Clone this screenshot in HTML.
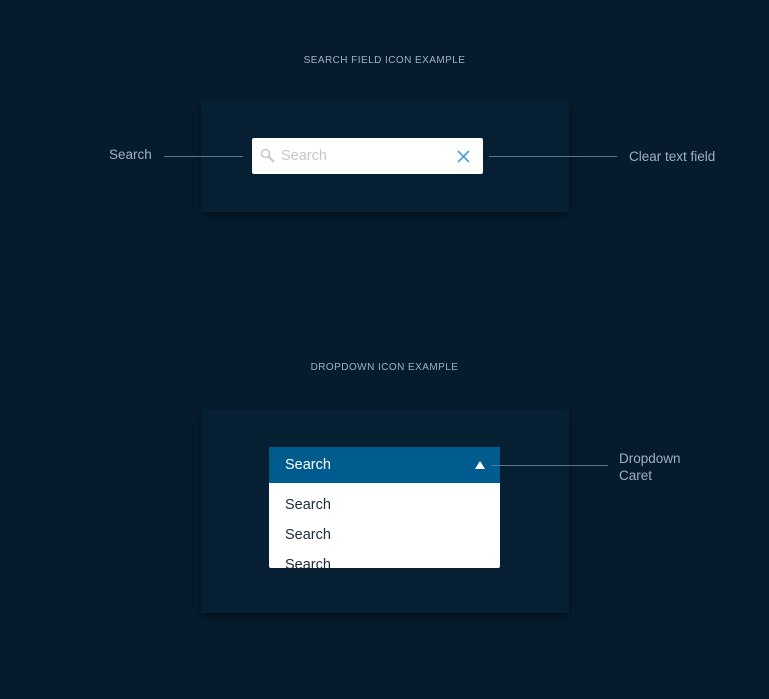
<!DOCTYPE html>
<html><head><style>
body{margin:0;width:769px;height:699px;background:#061c2e;font-family:"Liberation Sans",sans-serif;position:relative;overflow:hidden}
.t{position:absolute;font-size:10px;color:#9fb0bf;letter-spacing:.45px;width:769px;text-align:center}
.p{position:absolute;left:201px;width:368px;background:#071f33;box-shadow:0 3px 8px rgba(0,0,0,.45)}
.l{position:absolute;height:1px;background:#5f7585}
.lab{position:absolute;font-size:13.5px;color:#9fb0bf}
</style></head><body>
<div class="t" style="top:55px">SEARCH FIELD ICON EXAMPLE</div>
<div class="p" style="top:100px;height:112px"></div>
<div class="lab" style="left:109px;top:147px">Search</div>
<div class="l" style="left:164px;top:156px;width:79px"></div>
<div style="position:absolute;left:252px;top:138px;width:231px;height:36px;background:#fff;border-radius:2px">
<svg style="position:absolute;left:8px;top:10px" width="16" height="16" viewBox="0 0 16 16"><circle cx="5.5" cy="5.5" r="4" fill="none" stroke="#c5cad0" stroke-width="1.6"/><path d="M8.5 8.5L14 14" stroke="#c5cad0" stroke-width="2.2"/></svg>
<div style="position:absolute;left:29px;top:10px;font-size:14.5px;color:#c3c8ce">Search</div>
<svg style="position:absolute;left:205px;top:12px" width="13" height="13" viewBox="0 0 13 13"><path d="M1 1L12 12M12 1L1 12" stroke="#4a9fe0" stroke-width="1.6"/></svg>
</div>
<div class="l" style="left:489px;top:156px;width:128px"></div>
<div class="lab" style="left:629px;top:149px">Clear text field</div>

<div class="t" style="top:362px">DROPDOWN ICON EXAMPLE</div>
<div class="p" style="top:409px;height:204px"></div>
<div style="position:absolute;left:269px;top:447px;width:231px;height:121px;background:#fff;border-radius:2px;overflow:hidden">
<div style="height:36px;background:#005b8f;color:#fff;font-size:14.5px;line-height:36px;padding-left:16px;position:relative">Search
<div style="position:absolute;left:206px;top:14px;width:0;height:0;border-left:5px solid transparent;border-right:5px solid transparent;border-bottom:8px solid #fff"></div></div>
<div style="font-size:14.5px;color:#1d2b3a;padding-left:16px">
<div style="position:absolute;top:50px">Search</div>
<div style="position:absolute;top:80px">Search</div>
<div style="position:absolute;top:110px">Search</div></div>
</div>
<div class="l" style="left:491px;top:465px;width:117px"></div>
<div class="lab" style="left:619px;top:450px;line-height:17px">Dropdown<br>Caret</div>
</body></html>
